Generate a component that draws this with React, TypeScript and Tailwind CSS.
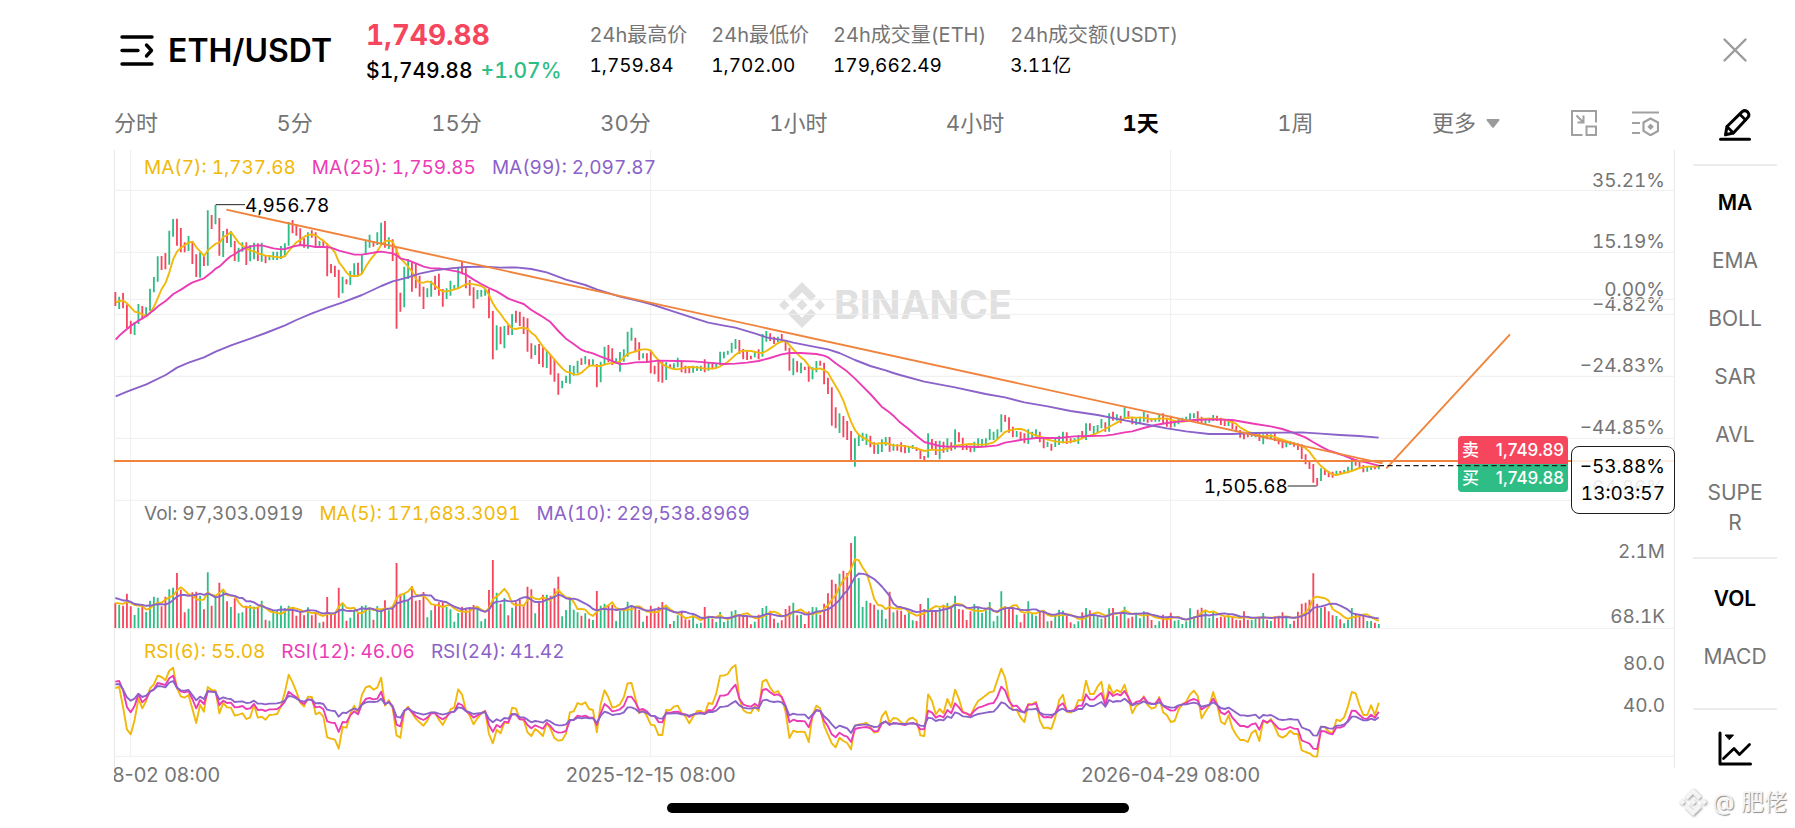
import React from "react";

/* Each day: direction (g = up, r = down), high, low, volume height. */
const CANDLES: { shift: number; rows: string }[] = [
  {
    shift: -15,
    rows: `r441,483,75 g455,492,70 r444,490,67 r478,550,103 r527,567,65 g532,570,39 g477,537,61 r483,523,63 g487,515,48 g431,498,82
g396,442,94 g334,410,91 r333,375,65 r324,373,94 g257,359,116 g222,275,121 r221,302,165 r249,322,115 r292,322,47 g273,318,58
r288,357,107 r328,396,109 g322,398,97 r332,363,56 g196,362,167 r210,252,67 g180,238,97 r219,332,136 g258,336,110 r251,294,80
g258,307,63 r288,348,89 g308,350,44 g292,320,47 r292,360,67 g300,349,69 g293,343,64 r295,348,62 g293,350,82 r332,355,25
g335,346,22 g320,345,45 g320,345,52 g303,342,67 g295,335,60 g231,302,67 r225,265,60 r238,272,37 r250,300,48 r280,308,38
g262,311,62 r256,278,38 r262,305,45 g288,303,16 r288,305,19 r295,394,93 r357,385,43 r362,396,43 r374,458,121 g395,445,75
r403,418,22 g378,420,31 g355,390,55 r353,390,45 g328,388,66 g285,330,68 g269,308,62 r288,305,25 g262,300,66 g233,300,58
r228,308,83 g277,312,53 r283,348,60 r310,551,195 r443,500,103 g365,487,105 g342,402,85 r352,440,126 r357,430,82 r392,455,84
r425,492,108 g430,457,32 g407,455,53 r392,435,70 r386,452,77 r432,485,77 g430,462,63 g407,452,56 g420,434,19 g367,430,45
r350,388,64 r370,430,59 r405,452,63 r427,490,69 g435,462,64 g435,455,20 g430,452,28 r432,520,114 r498,643,204 g541,616,106
r545,598,73 g543,610,90 r540,570,38 g507,570,61 r497,533,77 r500,543,85 r515,567,70 r520,620,124`,
  },
  {
    shift: 240,
    rows: `r340,386,116 g346,375,44
r342,402,75 r352,412,100 g360,414,100 r375,434,97 r388,455,119 r430,494,154 g452,475,35 g437,459,54 g405,461,92 g407,437,55
g392,430,47 r385,405,37 g378,403,44 r388,410,28 g388,408,24 r402,472,111 g395,457,67 g350,403,73 r345,397,67 r355,405,69
g385,400,21 g366,425,52 g358,395,57 g305,380,79 g293,332,69 r323,364,65 r337,391,55 g370,385,19 r370,397,37 r360,430,67
r407,433,57 r392,455,64 r395,458,78 g397,450,70 r403,415,12 g400,418,21 g383,412,38 r393,427,49 r407,430,26 r408,430,25
g407,428,38 g408,423,13 g407,423,16 r388,427,63 g398,422,37 r397,418,28 g400,415,18 g365,405,48 g365,385,18 g362,374,23
g338,368,50 g327,357,54 r330,372,42 r357,388,40 r360,390,37 r377,388,11 g363,382,19 r358,388,40 g312,380,60 g303,335,66
r310,333,52 r320,342,28 g320,337,16 r312,337,23 r330,362,57 r353,422,67 g385,436,76 r393,427,38 g398,430,40 r410,420,12
r408,455,50 g412,448,63 g393,427,62 r392,407,40 r398,463,73 r443,492,104 r472,587,145 r532,595,133 g550,609,163 r558,622,172
r573,630,165 r603,692,255 g625,710,275 g612,648,150 g608,633,63 g611,645,82 r617,652,75 r637,671,70 g643,672,55 g628,666,55
g621,647,28 r621,665,109 g641,662,47 r643,662,53 r637,667,52 r645,670,40 g648,668,48 g645,657,23 r652,663,21`,
  },
  {
    shift: 360,
    rows: `r541,567,72
r558,573,57 g490,563,90 r507,540,55 r513,555,54 g512,568,60 r515,548,70 g505,546,75 r517,542,63 g478,538,97 r487,517,57
r503,540,55 r525,540,24 r527,547,50 g515,545,72 g505,533,60 g507,530,45 g505,530,53 g477,510,78 g485,510,20 g478,508,37
g433,487,110 r435,455,65 r442,488,63 r470,502,64 g483,501,40 r485,510,17 r490,520,42 g478,522,80 g485,505,42 g478,500,37
r485,517,48 r500,535,52 g515,531,20 r521,542,22 g505,531,40 g497,525,55 g485,520,52 r487,522,37 r505,520,17 g505,517,11
g495,522,20 r483,508,47 g460,510,60 r460,482,53 g468,492,38 g465,490,35 g447,475,28 r457,485,32 g430,485,59 r425,452,60
g433,452,35 r437,460,48 g412,447,64 r423,447,29 r440,463,34 g445,465,40 g440,460,29 g425,455,50 r433,458,47 r445,455,24
g445,455,9 g433,455,20 r430,462,40 r443,470,33 r437,473,46 g450,470,22 g447,463,25 g443,457,12 g440,455,20 g430,452,59
g430,445,35 r424,457,55 r440,460,61 g448,462,55 g443,458,30 g435,453,48 r437,453,30 r443,465,34 r452,468,33 g453,468,34
r453,477,33 r467,485,25 r480,503,23 r485,508,50 r488,502,25 g488,500,24 g488,502,30 r492,513,32 g493,523,45 r492,508,25
g493,507,21 r490,513,35 r505,523,37 r512,535,47 g513,532,32 g513,525,12 r517,530,22 r520,540,49 r523,567,73 r553,583,76
r575,597,85 r582,638,164 r624,647,73 g595,633,60 r597,615,64 r603,622,50 r605,623,38 g602,618,36 r603,613,26 g600,612,14
g590,610,24 g565,603,60 r568,587,45 r570,592,40 r585,607,36 g590,605,21 g590,600,21 r590,598,16 g588,598,12`,
  },
];

const RSI6 = `579 576 636 703 718 675 611 640 618 580
568 542 546 556 527 518 580 604 608 600
641 684 629 650 576 585 586 655 624 637
638 662 659 655 672 667 630 668 665 674
660 659 657 634 592 539 562 590 623 635
605 606 658 652 665 727 731 734 761 696
698 657 632 655 600 577 573 584 578 548
632 615 640 721 728 650 635 653 671 682
692 676 653 653 674 690 668 643 637 583
598 645 662 688 670 655 647 717 745 704
715 682 685 638 641 672 675 712 723 702
711 723 683 702 729 737 735 716 652 649
624 629 622 642 645 712 627 586 607 638
635 628 607 565 564 610 655 645 663 689
691 720 720 645 646 635 632 654 664 685
665 648 648 656 624 627 596 542 542 537
519 510 611 645 653 654 634 648 560 554
578 594 588 606 650 729 707 711 710 711
741 660 632 640 692 719 745 757 728 738
744 763 692 688 687 684 696 713 710 664
649 683 669 671 682 688 672 668 677 721
723 598 617 658 642 655 612 637 584 612
650 656 662 637 618 610 601 592 589 555
521 549 610 644 645 668 681 627 628 620
677 699 698 702 668 616 599 650 653 645
615 616 557 597 597 575 560 630 570 596
585 592 569 610 655 633 625 604 630 641
637 606 652 661 681 678 645 628 620 598
587 603 670 650 633 591 627 680 688 661
700 720 735 735 741 714 706 738 677 685
672 696 722 728 721 707 717 717 766 771
775 784 785 695 697 710 715 674 678 667
634 591 595 632 660 660 631 660 623`;

const RSI12 = `560 558 585 636 652 633 598 622 611 590
583 564 567 570 550 542 577 589 592 588
612 640 615 627 590 590 591 630 617 624
623 637 636 633 642 640 627 645 644 648
643 643 642 634 620 590 599 607 620 627
613 615 637 635 642 679 683 684 711 681
682 661 649 658 628 612 609 613 611 590
628 620 634 689 694 648 639 651 663 670
675 668 655 655 666 673 665 652 650 625
630 648 656 668 661 655 649 690 710 690
697 680 682 657 658 673 673 690 700 691
696 701 684 694 708 713 712 708 677 674
662 665 662 668 668 690 655 627 636 649
647 643 633 606 605 622 645 642 649 662
663 681 682 652 654 651 650 656 658 666
659 655 653 656 645 646 631 602 602 598
582 569 611 628 633 635 626 635 585 582
592 600 598 606 632 682 674 678 678 679
697 663 645 648 677 694 718 727 713 721
725 741 702 699 697 696 700 709 708 686
679 690 684 685 688 690 686 684 688 703
702 647 653 668 662 667 645 655 625 637
652 655 662 647 638 635 630 626 624 605
575 587 618 633 632 645 653 629 629 625
655 667 666 668 654 633 625 647 648 645
632 632 598 614 614 603 594 630 590 603
597 601 588 607 630 621 618 607 622 626
625 611 633 640 647 646 633 628 624 616
612 617 643 636 629 611 628 652 658 648
668 681 693 693 697 688 685 704 676 682
676 688 701 704 701 696 701 702 736 741
746 761 762 708 709 715 718 697 698 693
677 647 648 660 670 672 659 668 650`;

const RSI24 = `568 567 583 607 617 611 596 606 602 590
584 573 574 577 563 558 578 586 587 585
600 616 605 612 588 590 591 613 607 611
612 621 620 619 624 623 617 626 626 628
626 626 625 622 617 603 605 610 617 620
614 614 625 624 627 644 647 648 665 653
654 646 641 645 629 622 620 621 620 611
627 622 634 665 668 647 641 648 653 656
659 656 652 652 656 659 656 652 650 637
639 648 652 657 655 654 651 672 682 673
678 669 671 657 658 667 667 674 682 678
680 683 675 680 688 691 691 688 675 675
668 670 668 670 670 683 662 650 654 660
658 657 652 637 637 642 652 650 654 662
663 670 671 655 656 655 655 658 659 662
658 656 655 657 651 651 647 636 635 633
625 618 631 638 640 641 638 640 617 614
619 621 619 622 634 661 656 659 659 659
671 658 646 648 664 674 688 700 692 696
700 714 692 690 689 689 692 696 695 684
680 688 685 686 687 687 686 685 687 692
693 668 670 678 674 676 664 669 652 656
664 665 667 661 657 655 653 651 650 638
622 626 638 645 644 650 652 643 643 641
653 659 659 660 656 645 641 649 649 648
642 642 626 633 633 627 621 635 615 621
618 619 611 621 631 626 625 619 625 627
627 622 631 635 638 637 631 629 628 625
623 626 635 632 630 622 630 639 642 638
645 653 661 661 663 661 659 670 660 662
660 666 673 675 674 672 674 674 697 702
706 721 722 695 696 700 701 692 692 688
680 665 665 671 676 676 671 675 667`;

const MA7 = [
  "17,472 28,468 40,467 51,475 63,488 74,500 86,503 97,508 109,514 121,502 132,485 144,458 155,432 167,413 178,382 190,342 201,320 213,308 225,300 236,293 248,290 259,307 271,320 282,333 294,316 306,305 317,296 329,293 340,276 352,270 363,261 375,278 386,293 398,303 409,310 421,316 433,319 444,326 456,328 467,332 479,333 490,335 502,336 513,338 525,333 536,318 548,304 559,292 571,285 583,275 594,270 606,268 617,271 629,280 640,287 652,298 663,308 675,323 687,352 698,366 710,383 721,393 733,393 744,393 756,386 768,364 779,347 791,332 802,318 814,299 825,289 837,286 848,290 860,318 871,340 883,352 895,366 906,380 918,402 929,413 941,413 952,409 964,412 975,422 987,432 998,439 1010,439 1021,437 1033,433 1044,430 1056,424 1068,418 1079,416 1091,418 1102,420 1114,423 1125,430 1137,450 1148,474 1160,493",
  "2,252 13,268 25,283 36,295 48,297 60,294 71,293 83,297 94,308 106,317 117,333 129,350 140,362 152,375 163,388 175,402 187,415 198,425 210,428 221,433 233,434 244,428 256,418 267,408 279,406 290,408 302,408 314,404 325,401 337,399 348,398 360,394 371,383 383,372 394,368 406,365 418,360 429,358 441,358 452,361 464,378 475,390 487,403 499,409 510,414 522,417 533,418 545,415 568,411 591,412 614,416 637,416 649,414 660,409 672,402 683,396 695,385 706,375 718,366 729,362 753,363 776,368 787,369 799,363 810,356 822,348 833,340 845,334 857,333 868,345 880,358 891,370 903,382 914,391 926,407 937,418 949,417 960,415 972,420 984,428 995,448 1007,468 1018,487 1030,512 1041,543 1053,575 1065,600 1076,614 1088,622 1099,628 1111,636 1122,643 1134,640 1157,639 1180,646",
  "3,527 26,530 50,535 73,543 96,539 119,541 142,536 165,527 188,524 211,522 234,524 257,524 281,517 292,508 304,497 315,486 327,482 338,479 350,477 362,477 373,480 385,487 396,492 408,496 431,504 443,509 466,514 489,517 512,515 535,510 558,499 581,494 604,483 627,471 651,458 674,445 685,442 708,443 731,443 754,448 777,445 801,446 824,453 847,455 881,451 904,446 939,446 974,449 997,457 1008,461 1020,472 1043,485 1066,494 1089,499 1112,497 1135,505 1158,513 1182,520 1205,528 1216,534 1228,545 1239,560 1251,575 1262,587 1274,597 1285,606 1297,613 1309,615 1332,609 1355,603 1378,594 1401,590 1436,590",
];

const MA25 = [
  "17,584 28,572 40,561 63,542 86,527 109,513 121,503 132,495 144,484 167,468 190,447 213,434 236,419 248,412 282,400 306,381 317,371 329,364 352,342 363,333 375,327 386,319 409,308 433,302 456,301 467,304 490,310 513,313 525,312 548,305 571,300 594,302 617,306 640,306 663,308 687,317 710,323 733,329 756,329 779,325 802,321 814,320 848,325 860,331 871,340 895,346 918,355 941,365 964,370 987,370 1010,374 1044,380 1068,389 1091,404 1114,417 1137,429 1148,434 1160,439",
  "0,190 25,206 48,214 71,222 94,240 117,254 129,261 152,277 175,303 187,315 198,326 221,342 244,359 256,364 279,370 302,380 325,388 348,398 360,402 383,401 406,397 441,396 475,392 533,393 579,394 625,398 672,402 706,401 741,398 776,393 810,384 845,373 868,369 903,369 949,372 972,377 984,382 1007,400 1041,424 1065,446 1088,469 1111,492 1145,530 1168,547 1180,557",
  "0,457 23,475 50,498 73,516 96,522 119,528 142,530 188,530 234,531 257,530 292,526 315,518 338,514 373,508 408,504 443,504 477,504 523,499 570,498 616,497 639,494 674,487 697,484 731,474 766,465 801,459 835,455 881,450 939,448 997,450 1031,456 1066,462 1112,469 1147,477 1182,489 1216,502 1239,516 1262,529 1285,541 1309,549 1332,557 1366,570 1401,578 1436,587",
];

const MA99 = [
  "17,754 51,740 109,718 167,690 201,668 236,653 282,637 317,620 363,601 421,581 467,564 525,541 559,525 606,505 652,488 698,472 756,450 814,423 848,409 883,400 929,386 975,376 1021,370 1068,366 1125,365 1160,367",
  "0,113 48,112 94,117 140,127 198,149 256,165 290,178 360,200 418,213 452,222 510,241 568,260 625,278 672,287 706,293 764,310 799,322 857,332 880,338 937,349 984,358 1018,369 1065,390 1111,408 1157,421 1180,429",
  "0,315 73,335 165,352 257,372 315,382 373,397 443,409 512,423 593,435 674,451 731,462 801,475 858,484 927,492 997,492 1066,489 1147,488 1205,487 1262,491 1320,495 1378,498 1436,503",
];

const SECTION_X = [-12, 1158, 2358];
const SECTION_Y = [-15, 240, 360];
const VIEW_W = 4683;
const PRICE_H = 1050;
const SUB_H = 384;

const xAt = (i: number) => 4 + i * 11.556;

const candles = CANDLES.flatMap(({ shift, rows }) =>
  rows.split(/\s+/).map((row) => {
    const [high, low, volume] = row.slice(1).split(",").map(Number);
    return { up: row[0] === "g", high: high + shift, low: low + shift, volume };
  }),
);

const joinSections = (sections: string[]) =>
  sections
    .map((s, n) =>
      s
        .split(" ")
        .map((p) => {
          const [x, y] = p.split(",").map(Number);
          return `${x + SECTION_X[n]},${y + SECTION_Y[n]}`;
        })
        .join(" "),
    )
    .join(" ");

const rsiPoints = (values: string) =>
  values
    .split(/\s+/)
    .map((v, i) => `${xAt(i).toFixed(1)},${Number(v) - 399}`)
    .join(" ");

const EARLIER_VOLUMES = [105, 105, 105, 105, 105, 75, 75, 75, 75];
const volumeAverage = (days: number) => {
  const all = [...EARLIER_VOLUMES, ...candles.map((c) => c.volume)];
  return candles
    .map((_, i) => {
      const end = i + EARLIER_VOLUMES.length + 1;
      const sum = all.slice(end - days, end).reduce((a, b) => a + b, 0);
      return `${xAt(i).toFixed(1)},${(SUB_H - sum / days).toFixed(1)}`;
    })
    .join(" ");
};

const candlePath = (up: boolean) =>
  candles
    .map((c, i) => (c.up === up ? `M${xAt(i).toFixed(1)} ${c.high}V${c.low}` : ""))
    .join("");
const volumePath = (up: boolean) =>
  candles
    .map((c, i) => (c.up === up ? `M${xAt(i).toFixed(1)} ${SUB_H}V${SUB_H - c.volume}` : ""))
    .join("");

const YELLOW = "#f0b90b";
const PINK = "#ec3cb5";
const PURPLE = "#8b62c9";
const GREEN = "#2ebd85";
const RED = "#f6465d";
const ORANGE = "#f0843c";

function Line({ points, color }: { points: string; color: string }) {
  return (
    <polyline
      points={points}
      fill="none"
      stroke={color}
      strokeWidth={1.9}
      strokeLinejoin="round"
      vectorEffect="non-scaling-stroke"
    />
  );
}

function Grid({ height, rows }: { height: number; rows: number[] }) {
  return (
    <g stroke="#eeeeee" strokeWidth={1}>
      {[50, 1610, 3170].map((x) => (
        <path key={x} d={`M${x} 0V${height}`} vectorEffect="non-scaling-stroke" />
      ))}
      {rows.map((y) => (
        <path key={y} d={`M0 ${y}H${VIEW_W}`} vectorEffect="non-scaling-stroke" />
      ))}
    </g>
  );
}

function Legend({ items }: { items: { text: string; tone: string }[] }) {
  return (
    <div className="relative flex gap-4 pl-[30px] text-[19px] leading-7">
      {items.map((it) => (
        <span key={it.text} className={it.tone}>
          {it.text}
        </span>
      ))}
    </div>
  );
}

function AxisLabels({ height, items }: { height: number; items: [string, number][] }) {
  return (
    <>
      {items.map(([text, y]) => (
        <span
          key={text}
          className="absolute right-[10px] -translate-y-full text-[19px] leading-[20px] text-[#757575]"
          style={{ top: `${(y / height) * 100}%` }}
        >
          {text}
        </span>
      ))}
    </>
  );
}

function BinanceMark({ className }: { className: string }) {
  return (
    <svg viewBox="0 0 46 46" className={className} fill="currentColor" aria-hidden="true">
      <path d="M23 0 37 14 32 19.2 23 10.2 14 19.2 9 14Z" />
      <path d="M23 46 37 32 32 26.800 23 35.800 14 26.800 9 32Z" />
      <path d="M5.200 17.800 10.400 23 5.200 28.200 0 23ZM40.800 17.800 46 23 40.800 28.200 35.600 23ZM23 17.600 28.400 23 23 28.400 17.600 23Z" />
    </svg>
  );
}

const STATS = [
  { label: "24h最高价", value: "1,759.84" },
  { label: "24h最低价", value: "1,702.00" },
  { label: "24h成交量(ETH)", value: "179,662.49" },
  { label: "24h成交额(USDT)", value: "3.11亿" },
];

const INTERVALS = ["分时", "5分", "15分", "30分", "1小时", "4小时", "1天", "1周"];

function Header() {
  return (
    <header className="flex h-[102px] items-start pl-[6px]">
      <button type="button" aria-label="交易对列表" className="mt-[35px]">
        <svg viewBox="0 0 34 31" className="h-[31px] w-[34px]" fill="none" stroke="black" strokeWidth="3.4" strokeLinecap="round" strokeLinejoin="round">
          <path d="M2 2H32M2 15.500H18M2 29H32M26.500 10 31.500 15.500 26.500 21" />
        </svg>
      </button>
      <h1 className="mt-[31px] ml-[14px] text-[32px] leading-10 font-semibold text-black">ETH/USDT</h1>
      <div className="mt-[17px] ml-[34px] whitespace-nowrap">
        <div className="text-[28px] leading-9 font-bold text-[#f6465d]">1,749.88</div>
        <div className="flex gap-2 text-[21px] leading-[35px] font-medium">
          <span className="text-black">$1,749.88</span>
          <span className="text-[#2ebd85]">+1.07%</span>
        </div>
      </div>
      <dl className="mt-[20px] ml-[28px] flex gap-6 whitespace-nowrap">
        {STATS.map((s) => (
          <div key={s.label}>
            <dt className="text-[20px] leading-[30px] text-[#757575]">{s.label}</dt>
            <dd className="text-[19px] leading-8 text-black">{s.value}</dd>
          </div>
        ))}
      </dl>
    </header>
  );
}

function IntervalTabs() {
  return (
    <nav className="flex h-12 items-center pr-4 pb-[6px] text-[22px] leading-8">
      <div className="flex flex-1 items-center justify-between">
        {INTERVALS.map((t) => (
          <button
            key={t}
            type="button"
            className={t === "1天" ? "font-bold text-black" : "text-[#757575]"}
          >
            {t}
          </button>
        ))}
        <button type="button" className="flex items-center gap-[10px] text-[#757575]">
          更多
          <svg viewBox="0 0 14 9" className="h-[9px] w-[14px]" fill="#9b9b9b">
            <path d="M1.500 0H12.500Q14.200 .3 13.300 1.600L8 8.200Q7 9.300 6 8.200L.7 1.600Q-.2 .3 1.500 0Z" />
          </svg>
        </button>
      </div>
      <button type="button" aria-label="画中画" className="ml-[71px]">
        <svg viewBox="0 0 26 26" className="size-[26px]" fill="none" stroke="#a0a0a0" strokeWidth="2">
          <path d="M25 12.500V1H1V25H11.500" />
          <rect x="15.500" y="16.500" width="9.500" height="8.500" />
          <path d="M5.500 5.500 12 12M12.500 5.500V12.500H6.500" />
        </svg>
      </button>
      <button type="button" aria-label="图表设置" className="ml-[35px]">
        <svg viewBox="0 0 27 26" className="h-[26px] w-[27px]" fill="none" stroke="#a0a0a0" strokeWidth="2.200">
          <path d="M0 2.500H27M0 13H8M0 23H8M18.500 8.500 26 12.500V21L18.500 25.200 11.500 21V12.500Z" />
          <path d="M18.600 13.600 21.800 16.800 18.600 20 15.400 16.800Z" fill="#a0a0a0" stroke="none" />
        </svg>
      </button>
    </nav>
  );
}

function PricePane() {
  return (
    <section aria-label="价格" className="relative h-[350px]">
      <div className="absolute top-[132px] left-[665px] flex items-center gap-[9px] text-[#e0e0e0]">
        <BinanceMark className="size-[46px]" />
        <span className="text-[39px] leading-[46px] font-bold">BINANCE</span>
      </div>
      <AxisLabels
        height={350}
        items={[
          ["35.21%", 41],
          ["15.19%", 102],
          ["0.00%", 150],
          ["−4.82%", 165],
          ["−24.83%", 226],
          ["−44.85%", 288],
          ["−64.86%", 348],
        ]}
      />
      <svg
        viewBox={`0 0 ${VIEW_W} ${PRICE_H}`}
        preserveAspectRatio="none"
        className="absolute inset-0 size-full overflow-visible"
        aria-hidden="true"
      >
        <Grid height={PRICE_H} rows={[121, 307, 448, 493, 679, 865, 1051]} />
        <path d={candlePath(true)} stroke={GREEN} strokeWidth={5.5} />
        <path d={candlePath(false)} stroke={RED} strokeWidth={5.5} />
        <Line points={joinSections(MA7)} color={YELLOW} />
        <Line points={joinSections(MA25)} color={PINK} />
        <Line points={joinSections(MA99)} color={PURPLE} />
        <Line points="337,179 3806,940" color={ORANGE} />
        <Line points="3817,955 4188,553" color={ORANGE} />
        <path d={`M0 933H${VIEW_W}`} stroke={ORANGE} strokeWidth={6} />
        <path d="M305 164H393M3521 1008H3608" stroke="#222222" strokeWidth={3} />
      </svg>

      <div className="pt-1">
        <Legend
          items={[
            { text: "MA(7): 1,737.68", tone: "text-[#f0b90b]" },
            { text: "MA(25): 1,759.85", tone: "text-[#ec3cb5]" },
            { text: "MA(99): 2,097.87", tone: "text-[#8b62c9]" },
          ]}
        />
      </div>
      <span className="absolute top-[45px] left-[8.400%] text-[19px] leading-[22px] text-black">4,956.78</span>
      <span className="absolute top-[326px] right-[24.800%] text-[19px] leading-[22px] text-black">1,505.68</span>

      <div className="absolute top-[286px] right-[107px] w-[110px] overflow-hidden rounded text-[17px] leading-[28px] font-medium text-white proportional-nums">
        <div className="flex justify-between bg-[#f6465d] px-1">
          <span>卖</span>
          <span>1,749.89</span>
        </div>
        <div className="flex justify-between bg-[#2ebd85] px-1">
          <span>买</span>
          <span>1,749.88</span>
        </div>
      </div>
      <svg
        viewBox={`0 0 ${VIEW_W} ${PRICE_H}`}
        preserveAspectRatio="none"
        className="absolute inset-0 size-full"
        aria-hidden="true"
      >
        <path d="M3794 947H4366" stroke="#1e1e1e" strokeWidth={4} strokeDasharray="16 10" />
      </svg>
      <div className="absolute top-[296px] right-0 w-[104px] rounded-lg border border-[#1e1e1e] bg-white/85 py-[6px] pr-[9px] text-right text-[19px] leading-[27px] text-black">
        <div>−53.88%</div>
        <div>13:03:57</div>
      </div>
    </section>
  );
}

function VolumePane() {
  return (
    <section aria-label="成交量" className="relative h-32">
      <AxisLabels height={128} items={[["2.1M", 62], ["68.1K", 127]]} />
      <svg
        viewBox={`0 0 ${VIEW_W} ${SUB_H}`}
        preserveAspectRatio="none"
        className="absolute inset-0 size-full overflow-visible"
        aria-hidden="true"
      >
        <Grid height={SUB_H} rows={[385]} />
        <path d={volumePath(true)} stroke={GREEN} strokeWidth={5.5} />
        <path d={volumePath(false)} stroke={RED} strokeWidth={5.5} />
        <Line points={volumeAverage(5)} color={YELLOW} />
        <Line points={volumeAverage(10)} color={PURPLE} />
      </svg>
      <Legend
        items={[
          { text: "Vol: 97,303.0919", tone: "text-[#757575]" },
          { text: "MA(5): 171,683.3091", tone: "text-[#f0b90b]" },
          { text: "MA(10): 229,538.8969", tone: "text-[#8b62c9]" },
        ]}
      />
    </section>
  );
}

function RsiPane() {
  return (
    <section aria-label="RSI" className="relative h-32">
      <AxisLabels height={128} items={[["80.0", 46], ["40.0", 88]]} />
      <svg
        viewBox={`0 0 ${VIEW_W} ${SUB_H}`}
        preserveAspectRatio="none"
        className="absolute inset-0 size-full overflow-visible"
        aria-hidden="true"
      >
        <Grid height={SUB_H} rows={[385]} />
        <Line points={rsiPoints(RSI6)} color={YELLOW} />
        <Line points={rsiPoints(RSI12)} color={PINK} />
        <Line points={rsiPoints(RSI24)} color={PURPLE} />
      </svg>
      <div className="pt-[10px]">
        <Legend
          items={[
            { text: "RSI(6): 55.08", tone: "text-[#f0b90b]" },
            { text: "RSI(12): 46.06", tone: "text-[#ec3cb5]" },
            { text: "RSI(24): 41.42", tone: "text-[#8b62c9]" },
          ]}
        />
      </div>
    </section>
  );
}

const DATES: [string, number][] = [
  ["2025-08-02 08:00", 50],
  ["2025-12-15 08:00", 1610],
  ["2026-04-29 08:00", 3170],
];

function DateAxis() {
  return (
    <div className="relative h-8 overflow-hidden">
      {DATES.map(([d, x]) => (
        <span
          key={d}
          className="absolute top-[5px] -translate-x-1/2 text-[20px] leading-7 whitespace-nowrap text-[#757575] proportional-nums"
          style={{ left: `${(x / VIEW_W) * 100}%` }}
        >
          {d}
        </span>
      ))}
    </div>
  );
}

function IndicatorButton({ name, active }: { name: string; active?: boolean }) {
  return (
    <button
      type="button"
      className={
        active
          ? "w-[66px] text-[21px] leading-[30px] font-semibold break-all text-black"
          : "w-[66px] text-[21px] leading-[30px] break-all text-[#757575]"
      }
    >
      {name}
    </button>
  );
}

function Sidebar() {
  return (
    <aside className="flex w-[120px] flex-col items-center">
      <button type="button" aria-label="关闭" className="mt-[38px]">
        <svg viewBox="0 0 24 24" className="size-6" fill="none" stroke="#9b9b9b" strokeWidth="2.400" strokeLinecap="round">
          <path d="M1.500 1.500 22.500 22.500M22.500 1.500 1.500 22.500" />
        </svg>
      </button>
      <button type="button" aria-label="画图" className="mt-[46px]">
        <svg viewBox="0 0 32 34" className="h-[34px] w-8" fill="none" stroke="black" strokeWidth="3" strokeLinejoin="round" strokeLinecap="round">
          <path d="M1.500 31.300H30.500" />
          <path d="M6.500 26.800 8 18.500 23.200 3.600Q26 1.400 28.600 3.900 31 6.600 29 9.300L14.400 25 Z" />
          <path d="M8 18.500 14.400 25M20.800 6.300 26.600 12" strokeWidth="2.600" />
        </svg>
      </button>
      <hr className="mt-[22px] w-[84px] border-t-2 border-[#ededed]" />
      <div className="mt-[22px] flex flex-col items-center gap-7">
        <IndicatorButton name="MA" active />
        <IndicatorButton name="EMA" />
        <IndicatorButton name="BOLL" />
        <IndicatorButton name="SAR" />
        <IndicatorButton name="AVL" />
        <IndicatorButton name="SUPER" />
      </div>
      <hr className="mt-[19px] w-[84px] border-t-2 border-[#ededed]" />
      <div className="mt-[25px] flex flex-col items-center gap-7">
        <IndicatorButton name="VOL" active />
        <IndicatorButton name="MACD" />
      </div>
      <hr className="mt-9 w-[84px] border-t-2 border-[#ededed]" />
      <button type="button" aria-label="图表类型" className="mt-[21px]">
        <svg viewBox="0 0 34 35" className="h-[35px] w-[34px]" fill="none" stroke="black" strokeWidth="3" strokeLinecap="round" strokeLinejoin="round">
          <path d="M2 2V33H32.500" />
          <path d="M5.500 27.500 16 17.500 21.500 23.500 31.500 13.500" strokeWidth="2.800" />
          <path d="M7.500 4H15.500L11.500 8.500Z" fill="black" strokeWidth="1" />
        </svg>
      </button>
    </aside>
  );
}

export default function App() {
  return (
    <div className="relative min-h-screen overflow-hidden bg-white font-[Inter,'Noto_Sans_CJK_SC',sans-serif] tabular-nums">
      <div className="flex">
        <main className="min-w-0 flex-1 pl-[114px]">
          <Header />
          <IntervalTabs />
          <div className="relative">
            <div className="absolute inset-x-0 top-0 bottom-5 border-x border-[#e8e8e8]" />
            <PricePane />
            <VolumePane />
            <RsiPane />
            <DateAxis />
          </div>
        </main>
        <Sidebar />
      </div>
      <div className="mx-auto mt-[15px] h-[10px] w-[462px] rounded-full bg-black" />
      <div className="absolute right-2 bottom-[10px] flex items-center gap-[6px] text-[23px] leading-8 text-[#f4f4f4] [text-shadow:1px_1px_1px_#8c8c8c]">
        <BinanceMark className="size-7 [filter:drop-shadow(1px_1px_1px_#9a9a9a)]" />
        <span>@ 肥佬</span>
      </div>
    </div>
  );
}
